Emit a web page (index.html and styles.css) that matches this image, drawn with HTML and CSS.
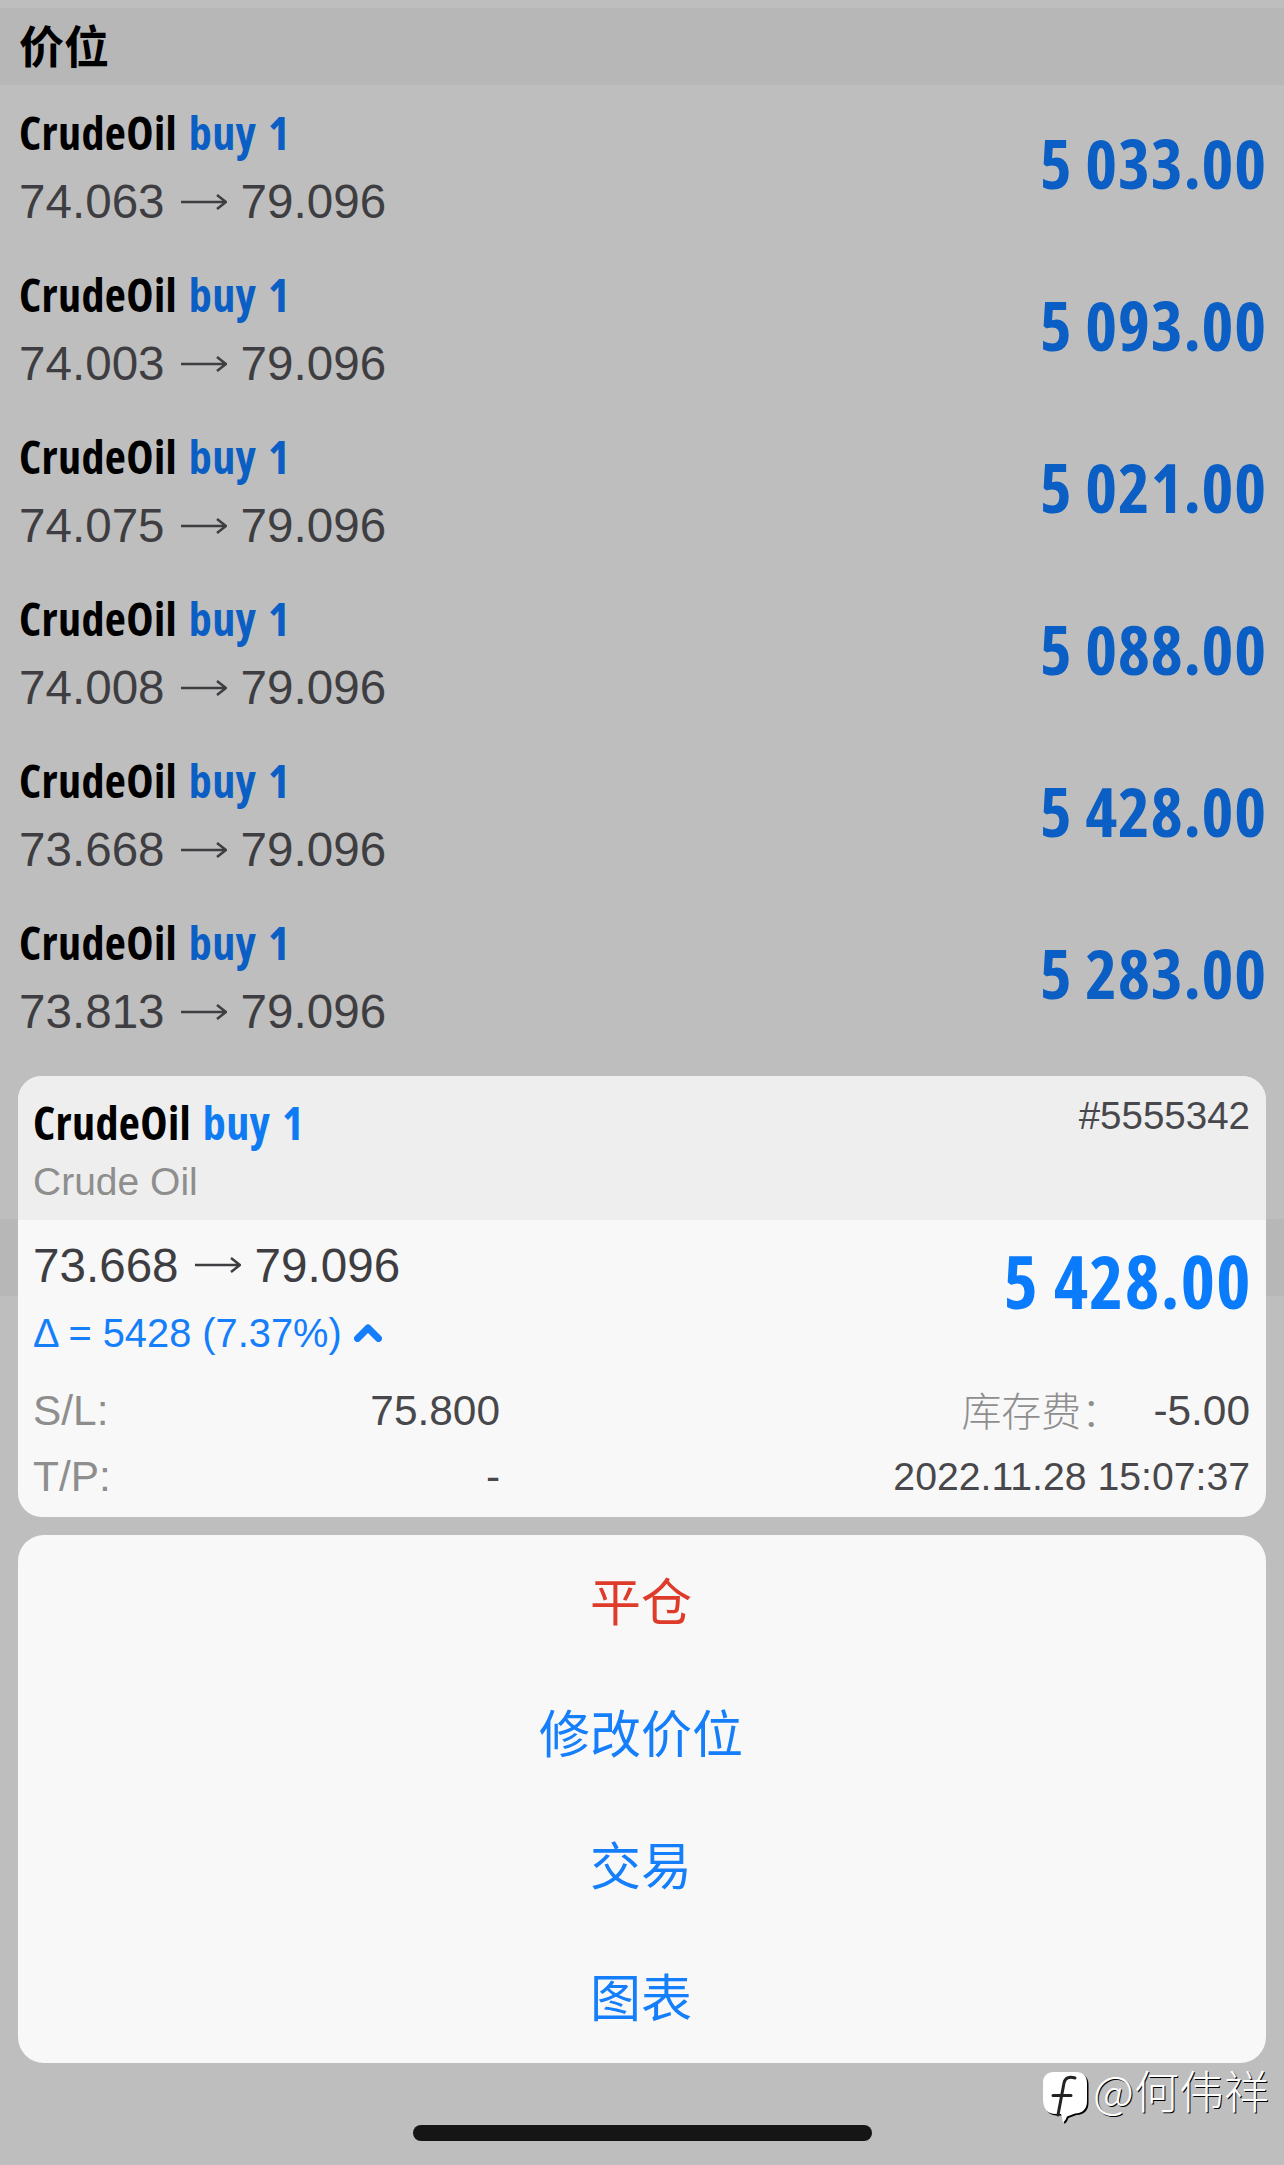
FILE: index.html
```html
<!DOCTYPE html>
<html lang="zh">
<head>
    <meta charset="UTF-8">
    <meta name="viewport" content="width=device-width, initial-scale=1.0">
    <title>价位</title>
    <link rel="stylesheet" href="styles.css">
</head>
<body>
    <div class="screen">
        <div class="section-head">价位</div>

        <div class="row">
            <div>
                <div class="row-title">CrudeOil <span class="side">buy 1</span></div>
                <div class="row-prices"><span>74.063</span><svg class="arrow" viewBox="0 0 46 18"><path d="M0 9H44M36 2L45 9L36 16"/></svg><span>79.096</span></div>
            </div>
            <div class="row-profit">5 033.00</div>
        </div>
        <div class="row">
            <div>
                <div class="row-title">CrudeOil <span class="side">buy 1</span></div>
                <div class="row-prices"><span>74.003</span><svg class="arrow" viewBox="0 0 46 18"><path d="M0 9H44M36 2L45 9L36 16"/></svg><span>79.096</span></div>
            </div>
            <div class="row-profit">5 093.00</div>
        </div>
        <div class="row">
            <div>
                <div class="row-title">CrudeOil <span class="side">buy 1</span></div>
                <div class="row-prices"><span>74.075</span><svg class="arrow" viewBox="0 0 46 18"><path d="M0 9H44M36 2L45 9L36 16"/></svg><span>79.096</span></div>
            </div>
            <div class="row-profit">5 021.00</div>
        </div>
        <div class="row">
            <div>
                <div class="row-title">CrudeOil <span class="side">buy 1</span></div>
                <div class="row-prices"><span>74.008</span><svg class="arrow" viewBox="0 0 46 18"><path d="M0 9H44M36 2L45 9L36 16"/></svg><span>79.096</span></div>
            </div>
            <div class="row-profit">5 088.00</div>
        </div>
        <div class="row">
            <div>
                <div class="row-title">CrudeOil <span class="side">buy 1</span></div>
                <div class="row-prices"><span>73.668</span><svg class="arrow" viewBox="0 0 46 18"><path d="M0 9H44M36 2L45 9L36 16"/></svg><span>79.096</span></div>
            </div>
            <div class="row-profit">5 428.00</div>
        </div>
        <div class="row">
            <div>
                <div class="row-title">CrudeOil <span class="side">buy 1</span></div>
                <div class="row-prices"><span>73.813</span><svg class="arrow" viewBox="0 0 46 18"><path d="M0 9H44M36 2L45 9L36 16"/></svg><span>79.096</span></div>
            </div>
            <div class="row-profit">5 283.00</div>
        </div>

        <!-- list carries on under the sheet -->
        <div class="row"></div>
        <div class="section-band"></div>

        <div class="overlay">
            <div class="detail">
                <div class="detail-head">
                    <div>
                        <div class="row-title">CrudeOil <span class="side-on">buy 1</span></div>
                        <div class="detail-name">Crude Oil</div>
                    </div>
                    <div class="detail-ticket">#5555342</div>
                </div>
                <div class="detail-body">
                    <div class="detail-main">
                        <div>
                            <div class="row-prices"><span>73.668</span><svg class="arrow" viewBox="0 0 46 18"><path d="M0 9H44M36 2L45 9L36 16"/></svg><span>79.096</span></div>
                            <div class="delta">Δ = 5428 (7.37%)<svg class="chevron" viewBox="0 0 28 18"><path d="M3.5 14.5L14 4L24.5 14.5"/></svg></div>
                        </div>
                        <div class="detail-profit">5 428.00</div>
                    </div>
                    <div class="detail-grid">
                        <div class="pair pair-left"><span class="key">S/L:</span><span class="val">75.800</span></div>
                        <div class="pair pair-right"><span class="key key-cjk">库存费：</span><span class="val">-5.00</span></div>
                        <div class="pair pair-left"><span class="key">T/P:</span><span class="val">-</span></div>
                        <div class="pair pair-right"><span class="val val-time">2022.11.28 15:07:37</span></div>
                    </div>
                </div>
            </div>

            <div class="sheet">
                <div class="sheet-item danger">平仓</div>
                <div class="sheet-item">修改价位</div>
                <div class="sheet-item">交易</div>
                <div class="sheet-item">图表</div>
            </div>

            <div class="home-bar"></div>
        </div>

        <div class="mark">
            <svg class="mark-logo" viewBox="0 0 48 54">
                <path class="mark-shadow" d="M13.500 2.500H35.500C42.500 2.500 46.500 6.500 46.500 13.500V31.500C46.500 39.500 42.500 43.500 34.500 44L26.500 47C25.500 49.500 24.500 51.500 22.500 53C21.500 49.500 21.500 46.500 20.500 44.500H15.500C6.500 44.500 2.500 38.500 2.500 29.500V13.500C2.500 6.500 6.500 2.500 13.500 2.500Z"/>
                <path class="mark-bubble" d="M12 1H34C41 1 45 5 45 12V30C45 38 41 42 33 42.500L25 45.500C24 48 23 50 21 51.500C20 48 20 45 19 43H14C5 43 1 37 1 28V12C1 5 5 1 12 1Z"/>
                <path class="mark-f" d="M33 7C27 5 23 7 22 12L16 44M11 24.500H29"/>
            </svg>
            <span class="mark-name">@何伟祥</span>
        </div>
    </div>
</body>
</html>
```
FILE: styles.css
```css
* {
    box-sizing: border-box;
}
body {
    margin: 0;
    background-color: #bebebe;
    font-family: "Liberation Sans", "Noto Sans CJK SC", sans-serif;
}
.screen {
    position: relative;
    width: 1284px;
    height: 2165px;
    padding-top: 8px;
    overflow: hidden;
}
.section-head {
    height: 77px;
    padding: 11px 19px 0;
    background-color: #b7b7b7;
    color: #000;
    font-size: 45px;
    font-weight: 700;
    line-height: 52px;
    font-family: "Noto Sans CJK SC", sans-serif;
}
.section-band {
    height: 77px;
    background-color: #b7b7b7;
}
.row {
    display: flex;
    justify-content: space-between;
    align-items: center;
    height: 162px;
    padding: 0 18px 0 19px;
}
.row-title {
    color: #000;
    font-family: "Open Sans", sans-serif;
    font-stretch: 75%;
    font-size: 46px;
    font-weight: 700;
    line-height: 64px;
    letter-spacing: 0.4px;
    word-spacing: 3px;
    white-space: nowrap;
}
.side {
    color: #0a5ec4;
}
.side-on {
    color: #0f7bf2;
}
.row-prices {
    display: flex;
    align-items: center;
    height: 62px;
    margin-top: 7px;
    color: #3e3e42;
    font-size: 47.6px;
}
.arrow {
    width: 46px;
    height: 18px;
    margin: 0 14px 0 16px;
    fill: none;
    stroke: #3e3e42;
    stroke-width: 2.5;
}
.row-profit {
    margin: 0 -1px 8px 0;
    color: #0a5ec4;
    font-family: "Open Sans", sans-serif;
    font-stretch: 75%;
    font-size: 68px;
    font-weight: 700;
    letter-spacing: 0.8px;
    white-space: nowrap;
}

/* action sheet sits over the dimmed list */
.overlay {
    position: absolute;
    top: 1076px;
    left: 18px;
    width: 1248px;
}
.detail {
    height: 441px;
    border-radius: 24px;
    overflow: hidden;
    background-color: #f8f8f8;
}
.detail-head {
    display: flex;
    justify-content: space-between;
    height: 144px;
    padding: 14px 16px 0 15px;
    background-color: #eeeeee;
}
.detail-name {
    margin-top: 6px;
    color: #8e8e8e;
    font-size: 39px;
    line-height: 44px;
}
.detail-ticket {
    padding-top: 4px;
    color: #48484c;
    font-size: 38.5px;
    line-height: 44px;
}
.detail-body {
    padding: 0 16px 0 15px;
}
.detail-main {
    display: flex;
    justify-content: space-between;
    height: 158px;
}
.detail-main .row-prices {
    margin-top: 14px;
    margin-bottom: 13px;
}
.delta {
    display: flex;
    align-items: center;
    color: #147efb;
    font-size: 39.8px;
    line-height: 48px;
}
.chevron {
    width: 28px;
    height: 18px;
    margin-left: 12px;
    fill: none;
    stroke: #147efb;
    stroke-width: 7;
    stroke-linecap: round;
    stroke-linejoin: round;
}
.detail-profit {
    margin: 23px -2px 0 0;
    color: #0a7bfa;
    font-family: "Open Sans", sans-serif;
    font-stretch: 75%;
    font-size: 73px;
    font-weight: 700;
    line-height: 76px;
    letter-spacing: 1.4px;
    white-space: nowrap;
}
.detail-grid {
    display: grid;
    grid-template-columns: 467px 1fr;
    grid-auto-rows: 66px;
}
.pair {
    display: flex;
    align-items: center;
    font-size: 42.4px;
}
.pair-left {
    justify-content: space-between;
}
.pair-right {
    justify-content: flex-end;
}
.key {
    color: #8e8e8e;
}
.key-cjk {
    margin: -5px 32px 0 0;
    font-family: "Noto Sans CJK TC", sans-serif;
    font-size: 40px;
    font-weight: 300;
}
.val {
    color: #48484c;
}
.val-time {
    font-size: 39.2px;
}
.sheet {
    display: flex;
    flex-direction: column;
    margin-top: 18px;
    border-radius: 26px;
    background-color: #f8f8f8;
}
.sheet-item {
    height: 132px;
    padding-right: 2px;
    color: #147efb;
    font-size: 51px;
    line-height: 128px;
    text-align: center;
    font-family: "Noto Sans CJK SC", sans-serif;
}
.danger {
    color: #df3b2a;
}
.home-bar {
    width: 459px;
    height: 16px;
    margin: 62px auto 0;
    border-radius: 8px;
    background-color: #151515;
}

/* repost watermark */
.mark {
    position: absolute;
    top: 2064px;
    left: 1042px;
    display: flex;
    align-items: flex-start;
    gap: 3px;
}
.mark-logo {
    width: 48px;
    height: 54px;
    margin-top: 7px;
}
.mark-shadow {
    fill: #000;
}
.mark-bubble {
    fill: #fff;
}
.mark-f {
    fill: none;
    stroke: #222;
    stroke-width: 3;
    stroke-linecap: round;
}
.mark-name {
    color: #fff;
    font-family: "Noto Sans CJK SC", sans-serif;
    font-size: 45px;
    font-weight: 300;
    line-height: 52px;
    text-shadow: 1px 1px 0 #000;
}
```
